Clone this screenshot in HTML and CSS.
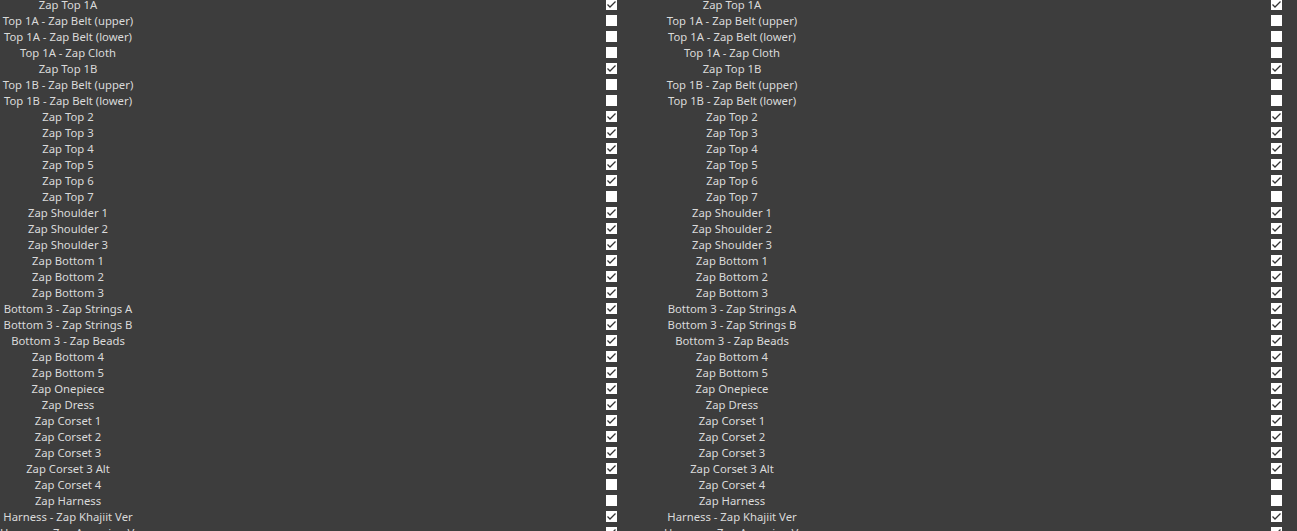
FILE: index.html
```html
<!DOCTYPE html>
<html>
<head>
<meta charset="utf-8">
<link rel="stylesheet" href="styles.css">
</head>
<body>
<div class="page">
  <div class="panel panel-left" id="left"></div>
  <div class="panel panel-right" id="right"></div>
</div>
<script src="app.js"></script>
</body>
</html>
```
FILE: styles.css
```css
html, body {
  margin: 0;
  padding: 0;
  background: #3d3d3d;
  overflow: hidden;
}
.page {
  display: grid;
  grid-template-columns: 664px 633px;
  margin-top: -3px;
  font-family: "Noto Sans", "Open Sans", sans-serif;
  font-size: 11.3px;
  color: #dadada;
}
.panel {
  display: flex;
  flex-direction: column;
}
.row {
  display: flex;
  align-items: center;
  height: 16px;
}
.label {
  width: 136px;
  text-align: center;
  white-space: nowrap;
  line-height: 16px;
}
.box {
  display: block;
  width: 11px;
  height: 11px;
  margin-top: -1px;
}
.panel-left .box { margin-left: 470px; }
.panel-right .box { margin-left: 471px; }
```
FILE: app.js
```js
var rows = [
  ["Zap Top 1A", 1],
  ["Top 1A - Zap Belt (upper)", 0],
  ["Top 1A - Zap Belt (lower)", 0],
  ["Top 1A - Zap Cloth", 0],
  ["Zap Top 1B", 1],
  ["Top 1B - Zap Belt (upper)", 0],
  ["Top 1B - Zap Belt (lower)", 0],
  ["Zap Top 2", 1],
  ["Zap Top 3", 1],
  ["Zap Top 4", 1],
  ["Zap Top 5", 1],
  ["Zap Top 6", 1],
  ["Zap Top 7", 0],
  ["Zap Shoulder 1", 1],
  ["Zap Shoulder 2", 1],
  ["Zap Shoulder 3", 1],
  ["Zap Bottom 1", 1],
  ["Zap Bottom 2", 1],
  ["Zap Bottom 3", 1],
  ["Bottom 3 - Zap Strings A", 1],
  ["Bottom 3 - Zap Strings B", 1],
  ["Bottom 3 - Zap Beads", 1],
  ["Zap Bottom 4", 1],
  ["Zap Bottom 5", 1],
  ["Zap Onepiece", 1],
  ["Zap Dress", 1],
  ["Zap Corset 1", 1],
  ["Zap Corset 2", 1],
  ["Zap Corset 3", 1],
  ["Zap Corset 3 Alt", 1],
  ["Zap Corset 4", 0],
  ["Zap Harness", 0],
  ["Harness - Zap Khajiit Ver", 1],
  ["Harness - Zap Argonian Ver", 1]
];
var NS = "http://www.w3.org/2000/svg";
function makeBox(checked) {
  var svg = document.createElementNS(NS, "svg");
  svg.setAttribute("class", "box");
  svg.setAttribute("viewBox", "0 0 11 11");
  var r = document.createElementNS(NS, "rect");
  r.setAttribute("width", "11");
  r.setAttribute("height", "11");
  r.setAttribute("fill", "#ffffff");
  svg.appendChild(r);
  if (checked) {
    var p = document.createElementNS(NS, "path");
    p.setAttribute("d", "M1.5 5.5 L4 8 L9.5 2.5");
    p.setAttribute("fill", "none");
    p.setAttribute("stroke", "#333333");
    p.setAttribute("stroke-width", "1.3");
    svg.appendChild(p);
  }
  return svg;
}
["left", "right"].forEach(function (id) {
  var panel = document.getElementById(id);
  rows.forEach(function (r) {
    var row = document.createElement("div");
    row.className = "row";
    var lab = document.createElement("span");
    lab.className = "label";
    lab.textContent = r[0];
    row.appendChild(lab);
    row.appendChild(makeBox(r[1]));
    panel.appendChild(row);
  });
});
```
